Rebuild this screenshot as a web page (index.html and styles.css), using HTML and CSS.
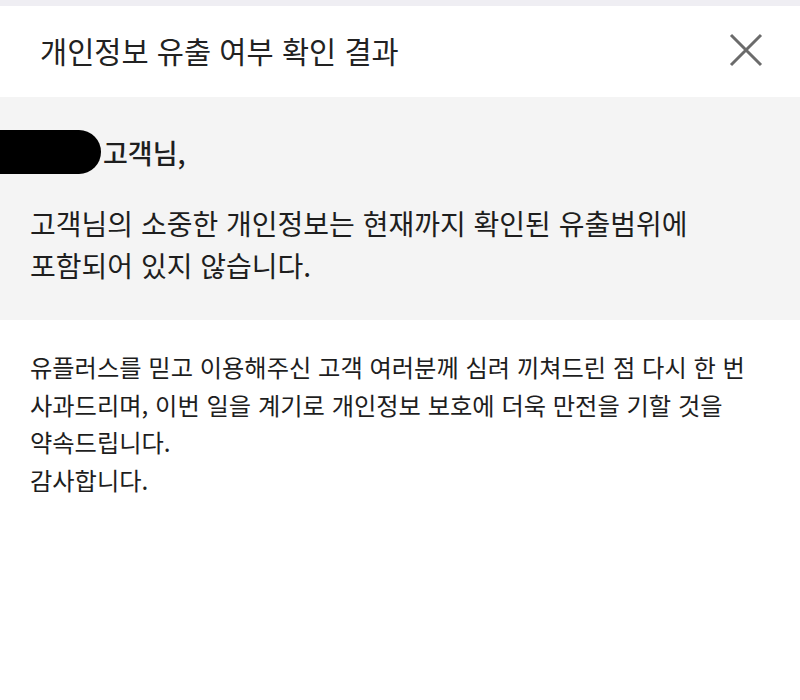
FILE: index.html
```html
<!DOCTYPE html>
<html lang="ko">
<head>
<meta charset="utf-8">
<link rel="stylesheet" href="styles.css">
</head>
<body>
<div class="topbar"></div>
<header class="header">
  <h1 class="title">개인정보 유출 여부 확인 결과</h1>
  <button class="close" aria-label="닫기">
    <svg width="34" height="34" viewBox="0 0 34 34"><path d="M2 2 L32 32 M32 2 L2 32" stroke="#6b6b6b" stroke-width="3" fill="none"/></svg>
  </button>
</header>
<section class="result">
  <div class="greeting"><span class="redact"></span><span class="name">고객님,</span></div>
  <p class="msg">고객님의 소중한 개인정보는 현재까지 확인된 유출범위에<br>포함되어 있지 않습니다.</p>
</section>
<section class="notice">
  <p>유플러스를 믿고 이용해주신 고객 여러분께 심려 끼쳐드린 점 다시 한 번<br>사과드리며, 이번 일을 계기로 개인정보 보호에 더욱 만전을 기할 것을<br>약속드립니다.<br>감사합니다.</p>
</section>
</body>
</html>
```

FILE: styles.css
```css
html, body {
  margin: 0;
  padding: 0;
  background: #ffffff;
  font-family: "Noto Sans CJK KR", "Noto Sans", sans-serif;
  color: #1e1e1e;
}
.topbar {
  height: 6px;
  background: #efeef3;
}
.header {
  height: 91px;
  box-sizing: border-box;
  display: flex;
  align-items: center;
  justify-content: space-between;
  padding: 0 37px 4px 40px;
}
.title {
  margin: 0;
  font-size: 29.5px;
  font-weight: 400;
  color: #222;
}
.close {
  border: 0;
  background: none;
  padding: 0;
  width: 34px;
  height: 34px;
  display: flex;
}
.result {
  background: #f4f4f4;
  padding: 33px 0 34px 0;
}
.greeting {
  display: flex;
  align-items: center;
  height: 44px;
  gap: 2px;
}
.redact {
  width: 101px;
  height: 44px;
  background: #000;
  border-radius: 0 22px 22px 0;
}
.name {
  font-size: 27px;
  font-weight: 500;
}
.msg {
  margin: 28px 0 0 30px;
  font-size: 28px;
  line-height: 42px;
}
.notice {
  padding: 28px 30px 0 30px;
}
.notice p {
  margin: 0;
  font-size: 24.25px;
  line-height: 37.5px;
}
```
